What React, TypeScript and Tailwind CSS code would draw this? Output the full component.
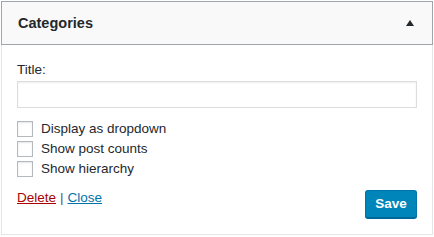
export default function App() {
  const options = ["Display as dropdown", "Show post counts", "Show hierarchy"];
  return (
    <div className="w-[434px] h-[237px] bg-white pt-[1px] px-[1px] font-['Liberation_Sans',Arial,sans-serif] text-[13.5px] text-[#23282d]">
      <div className="flex items-center justify-between h-[44px] border border-[#a0a5aa] bg-[#f9f9f9] pl-[16px] pr-[18px]">
        <h3 className="font-bold text-[14.5px] mt-[1px]">Categories</h3>
        <span className="w-0 h-0 border-l-[4px] border-r-[4px] border-b-[6px] border-l-transparent border-r-transparent border-b-[#23282d]"></span>
      </div>
      <div className="border border-t-0 border-[#e5e5e5] h-[190px] px-[15px] pt-[17px]">
        <label className="block leading-[16px]">Title:</label>
        <input type="text" className="block mt-[3px] w-[400px] h-[27px] border border-[#ddd] shadow-[inset_0_1px_2px_rgba(0,0,0,0.07)] outline-none" />
        <div className="mt-[13px] flex flex-col gap-[4px]">
          {options.map((o) => (
            <label key={o} className="flex items-center h-[16px]">
              <span className="w-[16px] h-[16px] border border-[#b4b9be] shadow-[inset_0_1px_2px_rgba(0,0,0,0.1)] bg-white"></span>
              <span className="ml-[8px]">{o}</span>
            </label>
          ))}
        </div>
        <div className="mt-[11px] flex items-start justify-between">
          <div>
            <a className="text-[#a00] underline">Delete</a>
            <span className="mx-[4px] text-[#555]">|</span>
            <a className="text-[#0073aa] underline">Close</a>
          </div>
          <button className="mt-[2px] w-[52px] h-[28px] rounded-[3px] bg-[#0085ba] border border-[#0073aa] border-b-[#006799] shadow-[0_1px_0_#006799] text-white font-bold text-[13.5px]">
            Save
          </button>
        </div>
      </div>
    </div>
  );
}
